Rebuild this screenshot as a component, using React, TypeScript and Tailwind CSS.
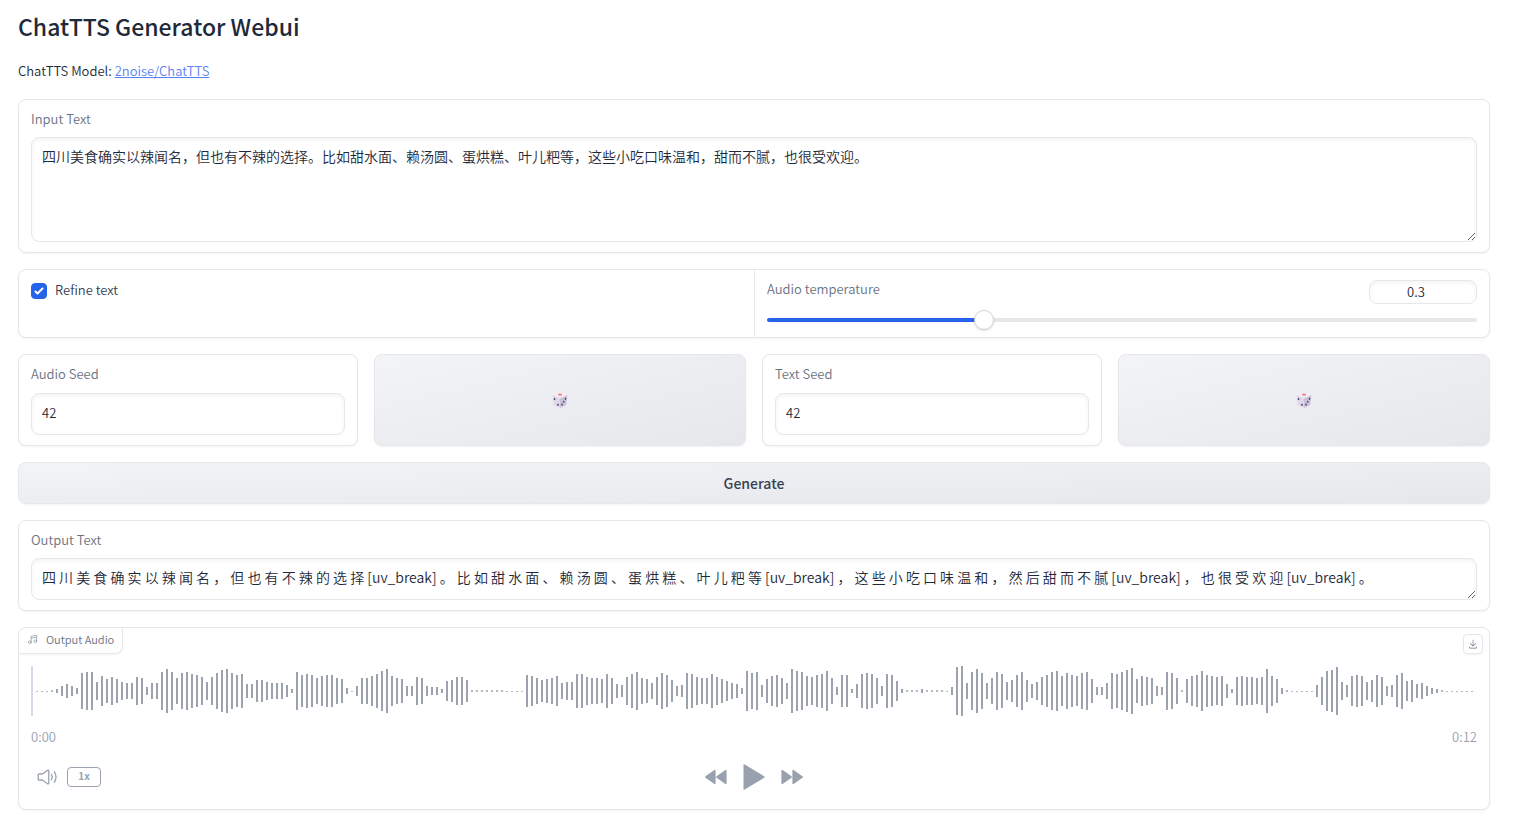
import { useState } from "react";
import type { ReactNode } from "react";

const LEVELS = [
  1, 1, 1, 2, 4, 10, 14, 10, 6, 36, 38, 38, 18, 30, 24, 28, 24, 18, 16, 16, 28, 26, 8, 16, 16, 38, 44, 38, 26, 36, 38, 34, 32, 28, 18,
  28, 36, 42, 44, 36, 32, 34, 14, 14, 22, 22, 18, 16, 16, 16, 12, 4, 38, 32, 34, 32, 26, 30, 32, 32, 26, 24, 6, 1, 10, 26, 26, 30, 34,
  40, 44, 30, 26, 24, 10, 10, 28, 26, 10, 8, 8, 4, 20, 22, 28, 28, 22, 2, 2, 2, 2, 2, 2, 2, 1, 1, 1, 1, 32, 30, 26, 22, 24, 26, 30, 16,
  18, 18, 34, 34, 28, 26, 26, 24, 34, 26, 14, 12, 28, 34, 38, 26, 24, 16, 28, 36, 32, 22, 10, 12, 36, 34, 28, 26, 26, 34, 28, 24, 20,
  16, 14, 6, 40, 36, 38, 12, 24, 30, 32, 26, 16, 44, 40, 38, 30, 28, 32, 34, 40, 26, 8, 32, 32, 4, 14, 34, 36, 34, 26, 10, 34, 32, 20,
  4, 2, 2, 2, 4, 2, 2, 2, 2, 1, 8, 48, 50, 16, 38, 44, 36, 16, 26, 38, 34, 18, 22, 32, 38, 22, 14, 18, 28, 32, 38, 40, 30, 36, 32, 30,
  36, 38, 24, 8, 8, 16, 36, 34, 38, 42, 46, 24, 30, 28, 26, 10, 8, 38, 36, 26, 2, 24, 30, 32, 40, 32, 30, 28, 30, 14, 4, 28, 30, 28, 28,
  26, 28, 44, 30, 24, 6, 2, 1, 1, 1, 1, 1, 12, 28, 40, 42, 48, 18, 12, 30, 32, 30, 18, 22, 32, 28, 10, 12, 32, 36, 20, 22, 14, 16, 10, 6,
  4, 2, 1, 1, 1, 1, 1, 1,
];

const INPUT_TEXT =
  "四川美食确实以辣闻名，但也有不辣的选择。比如甜水面、赖汤圆、蛋烘糕、叶儿粑等，这些小吃口味温和，甜而不腻，也很受欢迎。";
const OUTPUT_TEXT =
  "四 川 美 食 确 实 以 辣 闻 名 ， 但 也 有 不 辣 的 选 择 [uv_break] 。 比 如 甜 水 面 、 赖 汤 圆 、 蛋 烘 糕 、 叶 儿 粑 等 [uv_break] ， 这 些 小 吃 口 味 温 和 ， 然 后 甜 而 不 腻 [uv_break] ， 也 很 受 欢 迎 [uv_break] 。";

const CARD = "rounded-lg border border-gray-200 bg-white shadow-[0_1px_2px_rgba(0,0,0,0.05)]";
const FIELD =
  "block w-full rounded-lg border border-gray-200 bg-white px-2.5 text-gray-800 shadow-[inset_0_2px_4px_rgba(0,0,0,0.05)] outline-none";
const BUTTON =
  "flex items-center justify-center rounded-lg border border-gray-200 bg-linear-to-br from-gray-100 to-gray-200 shadow-[0_1px_2px_rgba(0,0,0,0.05)]";

function Label({ htmlFor, children }: { htmlFor: string; children: ReactNode }) {
  return (
    <label htmlFor={htmlFor} className="block text-[13px] leading-[18px] text-gray-500">
      {children}
    </label>
  );
}

function Dice() {
  return (
    <svg width="16" height="16" viewBox="0 0 16 16" aria-hidden="true">
      <path d="M8 0.6 15.4 3 8 6.4 0.6 3Z" fill="#f3edf5" />
      <path d="M0.6 3 8 6.2V16L1.8 13Z" fill="#dfd8e8" />
      <path d="M15.4 3 8 6.2V16L14.2 13Z" fill="#cbc1d9" />
      <ellipse cx="8" cy="2.7" rx="2" ry="1.1" fill="#fb7d84" />
      <g fill="#4b3f78">
        <ellipse cx="2.6" cy="7" rx="0.9" ry="1.1" />
        <ellipse cx="6" cy="12.8" rx="0.9" ry="1.1" />
        <ellipse cx="13.5" cy="6.8" rx="0.8" ry="1.1" />
        <ellipse cx="11.8" cy="9.7" rx="0.8" ry="1" />
        <ellipse cx="10" cy="12.6" rx="0.8" ry="1.1" />
      </g>
    </svg>
  );
}

function SeedPair({ id, label }: { id: string; label: string }) {
  return (
    <div className="grid grid-cols-[340fr_372fr] gap-4">
      <div className={`${CARD} px-3 py-2.5`}>
        <Label htmlFor={id}>{label}</Label>
        <input id={id} type="text" inputMode="numeric" defaultValue="42" className={`${FIELD} mt-2.5 h-[42px] pb-1 text-[13px]`} />
      </div>
      <button type="button" aria-label={`Random ${label}`} className={BUTTON}>
        <Dice />
      </button>
    </div>
  );
}

function Waveform() {
  return (
    <svg className="block h-[50px] w-full" viewBox="0 0 1446 50" preserveAspectRatio="none" aria-hidden="true">
      <rect x="0" y="0" width="2" height="50" fill="#ddd6e8" />
      {LEVELS.map((level, i) => (
        <rect key={i} x={5 + i * 5} y={25 - Math.floor(level / 2)} width="2" height={level} fill={level > 2 ? "#9ca3af" : "#b3b8c1"} />
      ))}
    </svg>
  );
}

export default function App() {
  const [temperature, setTemperature] = useState(0.3);
  const percent = temperature * 100;

  return (
    <main className="min-h-screen bg-white pr-[31px] pb-6 pl-[18px] font-['Noto_Sans_CJK_SC',sans-serif] text-[13px] font-[350] text-gray-800">
      <h1 className="pt-2 text-[23px] leading-9 font-medium text-gray-800">ChatTTS Generator Webui</h1>
      <p className="mt-4 h-[39px] text-[13px] leading-[22px]">
        ChatTTS Model:{" "}
        <a href="#model" className="text-[#5b80f3] underline">
          2noise/ChatTTS
        </a>
      </p>

      <div className="flex flex-col gap-4">
        <section className={`${CARD} px-3 py-2.5`}>
          <Label htmlFor="input-text">Input Text</Label>
          <textarea
            id="input-text"
            defaultValue={INPUT_TEXT}
            spellCheck={false}
            className={`${FIELD} mt-[9px] h-[105px] resize py-2 text-sm leading-[21px]`}
          />
        </section>

        <section className={`${CARD} grid h-[69px] grid-cols-2`}>
          <div className="px-3 pt-[11px]">
            <label className="flex h-5 items-center gap-2 text-gray-700">
              <span className="grid size-4">
                <input
                  type="checkbox"
                  defaultChecked
                  className="peer col-start-1 row-start-1 size-4 appearance-none rounded border border-gray-300 checked:border-[#2563eb] checked:bg-[#2563eb]"
                />
                <svg
                  viewBox="0 0 16 16"
                  fill="#fff"
                  aria-hidden="true"
                  className="pointer-events-none invisible col-start-1 row-start-1 size-4 peer-checked:visible"
                >
                  <path d="M12.207 4.793a1 1 0 010 1.414l-5 5a1 1 0 01-1.414 0l-2-2a1 1 0 011.414-1.414L6.5 9.086l4.293-4.293a1 1 0 011.414 0z" />
                </svg>
              </span>
              <span className="pb-0.5 leading-4">Refine text</span>
            </label>
          </div>
          <div className="border-l border-gray-200 px-3 py-2.5">
            <div className="flex justify-between">
              <Label htmlFor="temperature">Audio temperature</Label>
              <input
                type="text"
                inputMode="decimal"
                aria-label="Audio temperature value"
                value={temperature}
                onChange={(e) => setTemperature(Number(e.target.value) || 0)}
                className="h-6 w-[108px] rounded-lg border border-gray-200 pr-3.5 pb-0.5 text-center text-[13px] text-gray-800 shadow-[inset_0_2px_4px_rgba(0,0,0,0.05)] outline-none"
              />
            </div>
            <input
              id="temperature"
              type="range"
              min="0"
              max="1"
              step="0.1"
              value={temperature}
              onChange={(e) => setTemperature(Number(e.target.value))}
              style={{ backgroundImage: `linear-gradient(to right, #2563eb ${percent}%, #e5e7eb ${percent}%)` }}
              className="mt-3.5 block h-1 w-full appearance-none rounded-full [&::-webkit-slider-thumb]:size-5 [&::-webkit-slider-thumb]:appearance-none [&::-webkit-slider-thumb]:rounded-full [&::-webkit-slider-thumb]:border [&::-webkit-slider-thumb]:border-gray-300 [&::-webkit-slider-thumb]:bg-white [&::-webkit-slider-thumb]:shadow-sm"
            />
          </div>
        </section>

        <div className="grid grid-cols-2 gap-4">
          <SeedPair id="audio-seed" label="Audio Seed" />
          <SeedPair id="text-seed" label="Text Seed" />
        </div>

        <button type="button" className={`${BUTTON} h-[42px] text-sm font-medium text-gray-700`}>
          Generate
        </button>

        <section className={`${CARD} px-3 py-2.5`}>
          <Label htmlFor="output-text">Output Text</Label>
          <textarea
            id="output-text"
            defaultValue={OUTPUT_TEXT}
            spellCheck={false}
            className={`${FIELD} mt-[9px] h-[42px] resize overflow-hidden py-2 text-sm leading-[21px]`}
          />
        </section>

        <section className={`${CARD} text-gray-400`}>
          <div className="flex h-[38px] items-start justify-between">
            <h2 className="flex h-[26px] items-center gap-2 rounded-tl-lg rounded-br-lg border-r border-b border-gray-200 px-2 pb-0.5 text-[11px] text-gray-500 shadow-[0_1px_2px_rgba(0,0,0,0.05)]">
              <svg
                width="11"
                height="11"
                viewBox="0 0 24 24"
                fill="none"
                stroke="#8b919d"
                strokeWidth="1.5"
                strokeLinecap="round"
                strokeLinejoin="round"
                aria-hidden="true"
              >
                <path d="M9 18V5l12-2v13M9 9l12-2" />
                <circle cx="6" cy="18" r="3" />
                <circle cx="18" cy="16" r="3" />
              </svg>
              Output Audio
            </h2>
            <a
              href="#download"
              aria-label="Download"
              className="mt-1.5 mr-1.5 flex size-5 items-center justify-center rounded border border-gray-200 text-gray-500 shadow-[0_1px_2px_rgba(0,0,0,0.05)]"
            >
              <svg width="10" height="10" viewBox="0 0 32 32" fill="currentColor" aria-hidden="true">
                <path d="M26 24v4H6v-4H4v4a2 2 0 0 0 2 2h20a2 2 0 0 0 2-2v-4zM26 14l-1.41-1.41L17 20.17V2h-2v18.17l-7.59-7.58L6 14l10 10 10-10z" />
              </svg>
            </a>
          </div>

          <div className="px-3">
            <Waveform />
            <div className="mt-[11px] flex h-5 items-center justify-between text-[13px]">
              <time>0:00</time>
              <time>0:12</time>
            </div>
            <div className="mt-3 grid h-[50px] grid-cols-[1fr_auto_1fr] items-start pt-1">
              <div className="flex h-7 items-center gap-2.5 pl-1.5">
                <button type="button" aria-label="Adjust volume">
                  <svg
                    width="20"
                    height="16"
                    viewBox="0 0 20 16"
                    fill="none"
                    stroke="currentColor"
                    strokeWidth="1.3"
                    strokeLinecap="round"
                    strokeLinejoin="round"
                    aria-hidden="true"
                  >
                    <path d="M1 6.2Q1 5 2.2 5H4.6Q5.4 5 6.1 4.4L10.2 1.4Q11.8 0.4 11.8 2.2V13.8Q11.8 15.6 10.2 14.6L6.1 11.6Q5.4 11 4.6 11H2.2Q1 11 1 9.8 1.9 8 1 6.2Z" />
                    <path d="M14.4 5.2Q16 8 14.4 10.8M17.4 2.8Q20.6 8 17.4 13.2" />
                  </svg>
                </button>
                <button
                  type="button"
                  aria-label="Adjust playback speed to 1.5x"
                  className="h-5 w-[34px] rounded border border-gray-400 pb-0.5 text-[10px] leading-4 font-bold"
                >
                  1x
                </button>
              </div>
              <div className="flex h-7 items-center gap-4">
                <button type="button" aria-label="Skip backwards">
                  <svg width="22" height="16" viewBox="0 0 22 16" fill="currentColor" aria-hidden="true">
                    <path d="M0.5 7.2 9.4 1Q10.6 0.4 10.6 1.8V14.2Q10.6 15.6 9.4 15L0.5 8.8Q-0.4 8 0.5 7.2ZM11.5 7.2 20.4 1Q21.6 0.4 21.6 1.8V14.2Q21.6 15.6 20.4 15L11.5 8.8Q10.6 8 11.5 7.2Z" />
                  </svg>
                </button>
                <button type="button" aria-label="Play">
                  <svg width="22" height="26" viewBox="0 0 22 26" fill="currentColor" aria-hidden="true">
                    <path d="M0.5 1Q0.5 -0.4 1.8 0.5L20.8 12Q22.4 13 20.8 14L1.8 25.5Q0.5 26.4 0.5 25Z" />
                  </svg>
                </button>
                <button type="button" aria-label="Skip forward">
                  <svg width="22" height="16" viewBox="0 0 22 16" fill="currentColor" aria-hidden="true">
                    <path d="M21.5 7.2 12.6 1Q11.4 0.4 11.4 1.8V14.2Q11.4 15.6 12.6 15L21.5 8.8Q22.4 8 21.5 7.2ZM10.5 7.2 1.6 1Q0.4 0.4 0.4 1.8V14.2Q0.4 15.6 1.6 15L10.5 8.8Q11.4 8 10.5 7.2Z" />
                  </svg>
                </button>
              </div>
            </div>
          </div>
        </section>
      </div>
    </main>
  );
}
